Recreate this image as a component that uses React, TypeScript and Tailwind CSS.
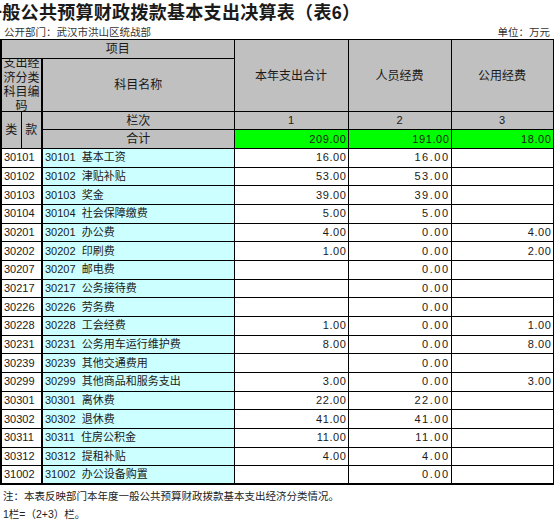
import React from "react";

type Row = { code: string; name: string; total: string; staff: string; pub: string };

const rows: Row[] = [
  { code: "30101", name: "基本工资", total: "16.00", staff: "16.00", pub: "" },
  { code: "30102", name: "津贴补贴", total: "53.00", staff: "53.00", pub: "" },
  { code: "30103", name: "奖金", total: "39.00", staff: "39.00", pub: "" },
  { code: "30104", name: "社会保障缴费", total: "5.00", staff: "5.00", pub: "" },
  { code: "30201", name: "办公费", total: "4.00", staff: "0.00", pub: "4.00" },
  { code: "30202", name: "印刷费", total: "1.00", staff: "0.00", pub: "2.00" },
  { code: "30207", name: "邮电费", total: "", staff: "0.00", pub: "" },
  { code: "30217", name: "公务接待费", total: "", staff: "0.00", pub: "" },
  { code: "30226", name: "劳务费", total: "", staff: "0.00", pub: "" },
  { code: "30228", name: "工会经费", total: "1.00", staff: "0.00", pub: "1.00" },
  { code: "30231", name: "公务用车运行维护费", total: "8.00", staff: "0.00", pub: "8.00" },
  { code: "30239", name: "其他交通费用", total: "", staff: "0.00", pub: "" },
  { code: "30299", name: "其他商品和服务支出", total: "3.00", staff: "0.00", pub: "3.00" },
  { code: "30301", name: "离休费", total: "22.00", staff: "22.00", pub: "" },
  { code: "30302", name: "退休费", total: "41.00", staff: "41.00", pub: "" },
  { code: "30311", name: "住房公积金", total: "11.00", staff: "11.00", pub: "" },
  { code: "30312", name: "提租补贴", total: "4.00", staff: "4.00", pub: "" },
  { code: "31002", name: "办公设备购置", total: "", staff: "0.00", pub: "" },
];

const font = "font-['Liberation_Sans','Noto_Sans_CJK_SC',sans-serif]";
const cell = "border border-black p-0";
const gray = "bg-[#c0c0c0]";

export default function App() {
  return (
    <div className={`w-[554px] h-[523px] overflow-hidden bg-white text-[#1a1a1a] ${font}`}>
      <div className="h-[26px] overflow-hidden pt-[2px] text-[18px] font-bold leading-[22px] whitespace-nowrap">
        <span className="-ml-[16px] tracking-[0.3px]">一般公共预算财政拨款基本支出决算表（表6）</span>
      </div>
      <div className="flex h-[13px] items-center justify-between px-[4px] text-[10.5px] leading-none text-[#333]">
        <span>公开部门：武汉市洪山区统战部</span>
        <span>单位：万元</span>
      </div>
      <table className="w-[553px] table-fixed border-collapse border-t border-r-[3px] border-b-2 border-l-2 border-black text-[12px] leading-none">
        <colgroup>
          <col className="w-[20px]" />
          <col className="w-[21px]" />
          <col className="w-[192px]" />
          <col className="w-[114px]" />
          <col className="w-[103px]" />
          <col className="w-[103px]" />
        </colgroup>
        <tbody>
          <tr className="h-[19px]">
            <td colSpan={3} className={`${cell} ${gray} text-center`}>项目</td>
            <td rowSpan={2} className={`${cell} ${gray} text-center`}>本年支出合计</td>
            <td rowSpan={2} className={`${cell} ${gray} text-center`}>人员经费</td>
            <td rowSpan={2} className={`${cell} ${gray} text-center`}>公用经费</td>
          </tr>
          <tr className="h-[53px]">
            <td colSpan={2} className={`${cell} ${gray} border-r-2`}>
              <div className="flex h-[52px] items-center justify-center overflow-hidden">
                <div className="w-[37px] text-center leading-[14.3px] break-all">支出经济分类科目编码</div>
              </div>
            </td>
            <td className={`${cell} ${gray} text-center`}>科目名称</td>
          </tr>
          <tr className="h-[18px]">
            <td rowSpan={2} className={`${cell} ${gray} text-center`}>类</td>
            <td rowSpan={2} className={`${cell} ${gray} border-r-2 text-center`}>款</td>
            <td className={`${cell} ${gray} text-center`}>栏次</td>
            <td className={`${cell} ${gray} text-center text-[11px]`}>1</td>
            <td className={`${cell} ${gray} text-center text-[11px]`}>2</td>
            <td className={`${cell} ${gray} text-center text-[11px]`}>3</td>
          </tr>
          <tr className="h-[19px]">
            <td className={`${cell} ${gray} text-center`}>合计</td>
            <td className={`${cell} bg-[#00ff00] pr-[1px] text-right text-[11px] tracking-[0.6px]`}>209.00</td>
            <td className={`${cell} bg-[#00ff00] pr-[1px] text-right text-[11px] tracking-[0.6px]`}>191.00</td>
            <td className={`${cell} bg-[#00ff00] pr-[1px] text-right text-[11px] tracking-[0.6px]`}>18.00</td>
          </tr>
          {rows.map((r) => (
            <tr key={r.code} className="h-[18.67px] text-[11px]">
              <td colSpan={2} className={`${cell} border-r-2 bg-white pl-[2px] whitespace-nowrap`}>{r.code}</td>
              <td className={`${cell} bg-[#ccffff] pl-[2px] whitespace-nowrap`}>
                {r.code}&nbsp;&nbsp;{r.name}
              </td>
              <td className={`${cell} pr-[1px] text-right tracking-[0.6px]`}>{r.total}</td>
              <td className={`${cell} pr-[1px] text-right tracking-[1.5px]`}>{r.staff}</td>
              <td className={`${cell} pr-[1px] text-right tracking-[0.6px]`}>{r.pub}</td>
            </tr>
          ))}
        </tbody>
      </table>
      <div className="pl-[3px] pt-[2px] text-[10.5px] leading-[18px] text-[#222]">
        <p>注：本表反映部门本年度一般公共预算财政拨款基本支出经济分类情况。</p>
        <p>1栏=（2+3）栏。</p>
      </div>
    </div>
  );
}
